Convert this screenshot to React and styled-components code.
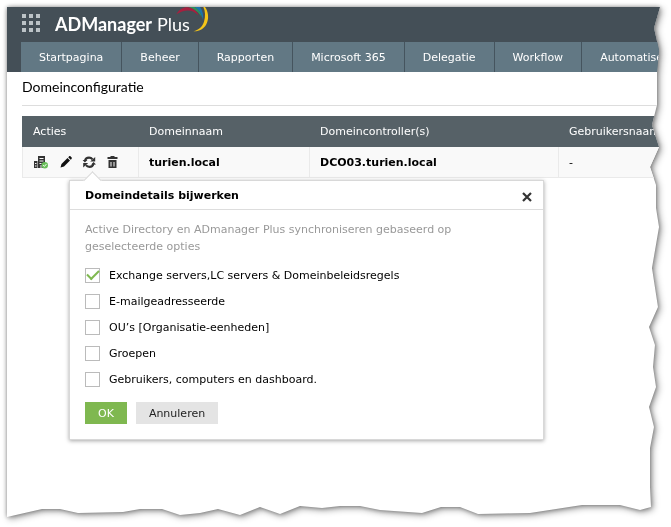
import { useState } from "react";
import styled, { createGlobalStyle } from "styled-components";

const MENU = [
  "Startpagina",
  "Beheer",
  "Rapporten",
  "Microsoft 365",
  "Delegatie",
  "Workflow",
  "Automatisering",
];

const OPTIONS = [
  { id: "exchange", label: "Exchange servers,LC servers & Domeinbeleidsregels" },
  { id: "mail", label: "E-mailgeadresseerde" },
  { id: "ou", label: "OU’s [Organisatie-eenheden]" },
  { id: "groups", label: "Groepen" },
  { id: "users", label: "Gebruikers, computers en dashboard." },
];

// outline of the torn paper, on a 653 x 510 grid
const TEAR = [
  [0, 0], [653, 0], [647, 21], [652, 43], [650, 65], [650, 98], [645, 118],
  [652, 140], [643, 160], [649, 178], [649, 201], [652, 220], [645, 261],
  [651, 300], [642, 320], [648, 338], [646, 360], [649, 380], [642, 400],
  [647, 420], [643, 441], [643, 480], [644, 500], [633, 503], [613, 498],
  [575, 498], [523, 506], [471, 507], [453, 500], [434, 500], [415, 506],
  [373, 503], [353, 499], [333, 499], [315, 501], [293, 499], [273, 507],
  [253, 500], [233, 508], [211, 502], [193, 506], [173, 508], [155, 502],
  [133, 502], [116, 505], [71, 506], [53, 502], [35, 502], [0, 510],
];

const outline = TEAR.map(
  ([x, y]) => `${(x / 6.53).toFixed(2)}% ${(y / 5.1).toFixed(2)}%`
).join(", ");

export default function App() {
  const [open, setOpen] = useState(true);
  const [checked, setChecked] = useState({ exchange: true });

  return (
    <Shadow>
      <GlobalStyle />
      <Paper>
        <Header>
          <Brand>
            <GridButton aria-label="Apps">
              <svg width="18" height="18" viewBox="0 0 18 18" fill="#bcc3c7">
                {[0, 7, 14].map((y) =>
                  [0, 7, 14].map((x) => (
                    <rect key={`${x}-${y}`} x={x} y={y} width="4" height="4" />
                  ))
                )}
              </svg>
            </GridButton>
            <Logo>
              <strong>ADManager</strong> Plus
              <Swoosh />
            </Logo>
          </Brand>
          <Menu>
            {MENU.map((item) => (
              <a key={item} href="#">
                {item}
              </a>
            ))}
          </Menu>
        </Header>
        <Content>
          <Title>Domeinconfiguratie</Title>
          <Table>
            <thead>
              <tr>
                <Th $width={116}>Acties</Th>
                <Th $width={171}>Domeinnaam</Th>
                <Th $width={249}>Domeincontroller(s)</Th>
                <Th $width={171}>Gebruikersnaam</Th>
              </tr>
            </thead>
            <tbody>
              <tr>
                <Td>
                  <Actions>
                    <IconButton aria-label="Domeinstatus">
                      <ServerIcon />
                    </IconButton>
                    <IconButton aria-label="Bewerken">
                      <PencilIcon />
                    </IconButton>
                    <Anchor>
                      <IconButton
                        aria-label="Domeindetails bijwerken"
                        onClick={() => setOpen(!open)}
                      >
                        <SyncIcon />
                      </IconButton>
                      {open && (
                        <Popup role="dialog" aria-labelledby="popup-title">
                          <PopupHeader>
                            <h2 id="popup-title">Domeindetails bijwerken</h2>
                            <CloseButton
                              aria-label="Sluiten"
                              onClick={() => setOpen(false)}
                            >
                              <svg width="10" height="10" viewBox="0 0 10 10">
                                <path
                                  d="M1 1l8 8M9 1l-8 8"
                                  stroke="#333"
                                  strokeWidth="2.2"
                                />
                              </svg>
                            </CloseButton>
                          </PopupHeader>
                          <PopupBody>
                            <p>
                              Active Directory en ADmanager Plus synchroniseren
                              gebaseerd op geselecteerde opties
                            </p>
                            <Options>
                              {OPTIONS.map(({ id, label }) => (
                                <Option key={id}>
                                  <Checkbox
                                    type="checkbox"
                                    checked={!!checked[id]}
                                    onChange={(e) =>
                                      setChecked({
                                        ...checked,
                                        [id]: e.target.checked,
                                      })
                                    }
                                  />
                                  {label}
                                </Option>
                              ))}
                            </Options>
                            <Buttons>
                              <Button $primary>OK</Button>
                              <Button onClick={() => setOpen(false)}>
                                Annuleren
                              </Button>
                            </Buttons>
                          </PopupBody>
                        </Popup>
                      )}
                    </Anchor>
                    <IconButton aria-label="Verwijderen">
                      <TrashIcon />
                    </IconButton>
                  </Actions>
                </Td>
                <Td>
                  <b>turien.local</b>
                </Td>
                <Td>
                  <b>DCO03.turien.local</b>
                </Td>
                <Td>-</Td>
              </tr>
            </tbody>
          </Table>
        </Content>
      </Paper>
    </Shadow>
  );
}

function Swoosh() {
  return (
    <svg width="36" height="27" viewBox="525 21 108 81">
      <path d="M526 43C536 24 556 17 574 25C584 30 590 38 592 46C578 30 554 24 526 43Z" fill="#a5203f" />
      <path d="M563 21H582C594 28 601 39 603 53C594 38 582 27 563 21Z" fill="#2f8f5b" />
      <path d="M582 21H597C605 32 608 45 606 60C602 43 596 31 582 21Z" fill="#1b74ad" />
      <path d="M607 21H612C622 35 625 55 616 73C608 88 594 95 577 94C593 90 604 80 609 65C614 49 613 34 607 21Z" fill="#f5c518" />
    </svg>
  );
}

function ServerIcon() {
  return (
    <svg width="16" height="16" viewBox="0 0 16 16">
      <path d="M5 2h7v12H5zM1 7h3.5v7H1z" fill="#333" />
      <path d="M6.5 4.5h4M6.5 7h4M6.5 9.5h2M2 9.5h1.5M2 12h1.5M8 11v3" stroke="#f9f9f9" />
      <circle cx="11.8" cy="11.2" r="3.2" fill="#6abf5b" />
      <path d="M10.2 11.2l1.2 1.2 2-2.3" stroke="#fff" fill="none" />
    </svg>
  );
}

function PencilIcon() {
  return (
    <svg width="16" height="16" viewBox="0 0 16 16" fill="#111">
      <path d="M3.500 13.500l1-3.600 6-6 2.500 2.500-6 6z" />
      <path d="M11.200 3.200l.8-.8c.6-.5 1.100-.5 1.600 0l.9.9c.5.5.5 1 0 1.600l-.8.8z" />
    </svg>
  );
}

function SyncIcon() {
  return (
    <svg width="16" height="16" viewBox="0 0 16 16">
      <path
        d="M4 6.800C4.400 4.900 6 3.700 8 3.700C9.500 3.700 10.700 4.300 11.500 5.400M12.500 9.700C12 11.600 10.500 12.800 8.500 12.800C7 12.800 5.800 12.200 5 11.100"
        fill="none"
        stroke="#333"
        strokeWidth="2.2"
      />
      <path d="M9.200 7.600h5V3zM7.200 8.900h-5v4.600zM1.600 6h4.800L3.900 8.400zM10.200 10.500h4.800L12.600 8z" fill="#333" />
    </svg>
  );
}

function TrashIcon() {
  return (
    <svg width="16" height="16" viewBox="0 0 16 16">
      <path d="M5.500 2h4v1h3v2H2.500V3h3zM3.500 6h8v8h-8z" fill="#333" />
      <path d="M6 8v4.500M9 8v4.500" stroke="#f9f9f9" />
    </svg>
  );
}

const GlobalStyle = createGlobalStyle`
  * {
    box-sizing: border-box;
  }
  body {
    margin: 0;
    background-color: #fff;
    color: #000;
    font-family: "DejaVu Sans", Verdana, sans-serif;
    font-size: 11px;
  }
  button, input {
    font: inherit;
    margin: 0;
  }
`;

const Shadow = styled.div`
  display: flex;
  min-height: 100vh;
  padding: 7px 11px 10px 7px;
  overflow: hidden;
  filter: drop-shadow(0 0 2px rgba(0, 0, 0, 0.35))
    drop-shadow(2px 2px 3px rgba(0, 0, 0, 0.4));
`;

const Paper = styled.div`
  flex: 1;
  min-width: 0;
  overflow: hidden;
  background-color: #fff;
  clip-path: polygon(${outline});
`;

const Header = styled.header`
  background-color: #444f57;
  padding-left: 14px;
`;

const Brand = styled.div`
  display: flex;
  height: 35px;
  padding-left: 1px;
  gap: 15px;
`;

const GridButton = styled.button`
  border: none;
  background: none;
  padding: 7px 0 0;
  height: 25px;
  line-height: 0;
`;

const Logo = styled.div`
  display: flex;
  gap: 5px;
  color: #fff;
  font-family: Lato, sans-serif;
  font-size: 18px;
  font-weight: 400;
  line-height: 34px;
  strong {
    font-weight: 700;
  }
  svg {
    margin-left: -19px;
  }
`;

const Menu = styled.nav`
  display: flex;
  background-color: #627884;
  a {
    padding: 0 18px;
    border-right: 1px solid #45545e;
    color: #fff;
    line-height: 31px;
    height: 30px;
    text-decoration: none;
    white-space: nowrap;
  }
`;

const Content = styled.main`
  padding-left: 15px;
`;

const Title = styled.h1`
  margin: 0 0 10px;
  height: 34px;
  border-bottom: 1px solid #ddd;
  font-family: Lato, sans-serif;
  font-size: 14px;
  font-weight: 400;
  line-height: 30px;
`;

const Table = styled.table`
  width: 707px;
  min-width: 100%;
  table-layout: fixed;
  border-collapse: separate;
  border-spacing: 0;
`;

const Th = styled.th`
  width: ${(props) => props.$width}px;
  height: 31px;
  padding: 0 11px;
  background-color: #566167;
  color: #fff;
  font-weight: 400;
  text-align: left;
`;

const Td = styled.td`
  height: 31px;
  padding: 0 10px;
  background-color: #f9f9f9;
  border: solid #eaeaea;
  border-width: 0 0 1px 1px;
`;

const Actions = styled.div`
  display: flex;
  gap: 8px;
`;

const IconButton = styled.button`
  display: block;
  width: 16px;
  height: 16px;
  padding: 0;
  border: none;
  background: none;
  cursor: pointer;
`;

const Anchor = styled.div`
  position: relative;
`;

const Popup = styled.section`
  position: absolute;
  top: 26px;
  left: -12px;
  width: 475px;
  background-color: #fff;
  border: 1px solid #d8d8d8;
  box-shadow: 0 1px 4px rgba(0, 0, 0, 0.35);
  &::before {
    content: "";
    position: absolute;
    top: -7px;
    left: 16px;
    width: 12px;
    height: 12px;
    background-color: #fff;
    border: solid #d8d8d8;
    border-width: 1px 0 0 1px;
    transform: rotate(45deg);
  }
`;

const PopupHeader = styled.div`
  display: flex;
  align-items: center;
  justify-content: space-between;
  height: 29px;
  padding: 0 11px 0 15px;
  border-bottom: 1px solid #ddd;
  h2 {
    margin: 0;
    font-size: 11px;
    font-weight: 700;
  }
`;

const CloseButton = styled.button`
  display: flex;
  padding: 4px 0 0;
  border: none;
  background: none;
  cursor: pointer;
`;

const PopupBody = styled.div`
  padding: 11px 15px 15px;
  p {
    margin: 0 0 13px;
    color: #999;
    line-height: 17px;
  }
`;

const Options = styled.div`
  display: flex;
  flex-direction: column;
  gap: 11px;
`;

const Option = styled.label`
  display: flex;
  align-items: center;
  gap: 9px;
  height: 15px;
`;

const Checkbox = styled.input`
  appearance: none;
  width: 15px;
  height: 15px;
  border: 1px solid #bbb;
  background-color: #fff;
  display: grid;
  place-items: center;
  &:checked::after {
    content: "";
    width: 10px;
    height: 5px;
    margin-bottom: 4px;
    border: solid #7fb850;
    border-width: 0 0 2px 2px;
    transform: rotate(-45deg);
  }
`;

const Buttons = styled.div`
  display: flex;
  gap: 9px;
  margin-top: 15px;
`;

const Button = styled.button`
  height: 22px;
  padding: 0 13px;
  border: none;
  background-color: ${(props) => (props.$primary ? "#7fb850" : "#e4e4e4")};
  color: ${(props) => (props.$primary ? "#fff" : "#222")};
  cursor: pointer;
`;
